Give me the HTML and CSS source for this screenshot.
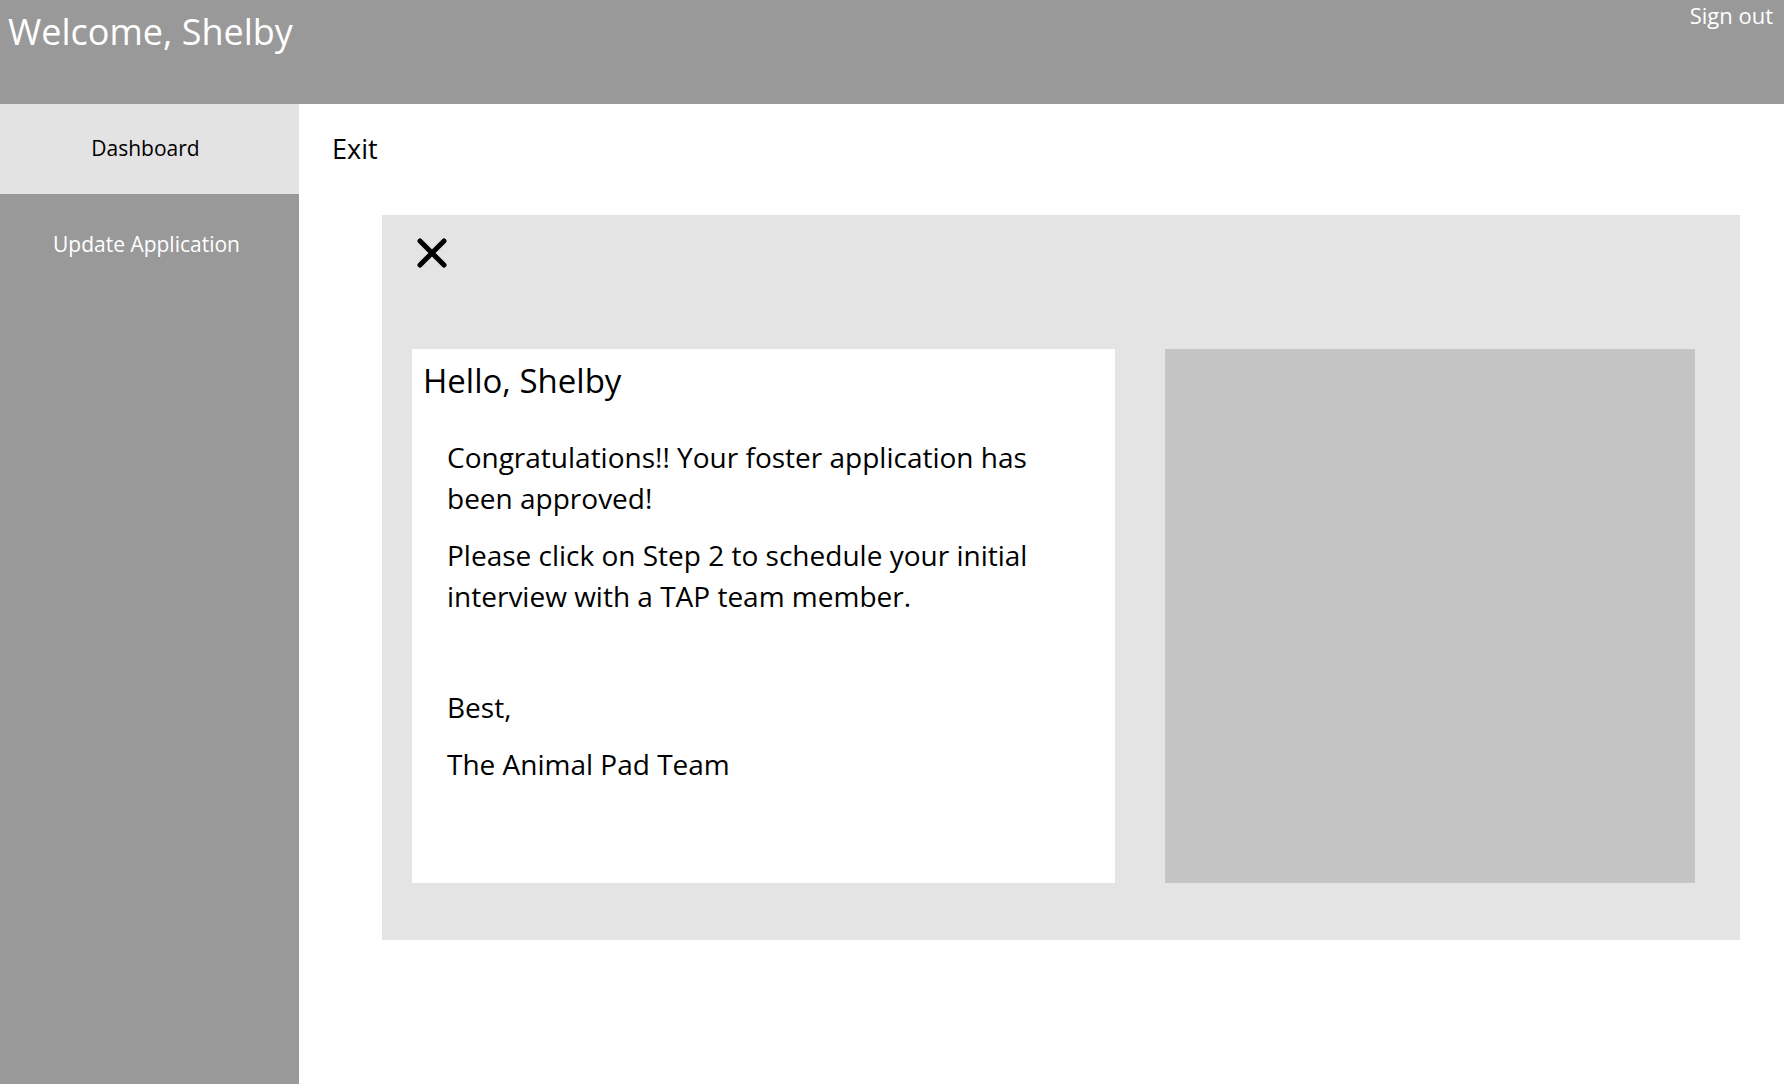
FILE: index.html
```html
<!DOCTYPE html>
<html lang="en">
<head>
    <meta charset="UTF-8">
    <meta name="viewport" content="width=device-width, initial-scale=1.0">
    <title>Dashboard</title>
    <link rel="stylesheet" href="styles.css">
</head>
<body>
    <header class="topbar">
        <h1 class="welcome">Welcome, Shelby</h1>
        <a class="signout" href="#">Sign out</a>
    </header>

    <div class="layout">
        <nav class="sidebar">
            <a class="nav-item nav-active" href="#">Dashboard</a>
            <a class="nav-item nav-update" href="#">Update Application</a>
        </nav>

        <main class="content">
            <a class="exit" href="#">Exit</a>

            <div class="modal">
                <button class="close" type="button" aria-label="Close">
                    <svg width="30" height="30" viewBox="0 0 30 30">
                        <path d="M3 3 L27 27 M27 3 L3 27" stroke="#000" stroke-width="5" stroke-linecap="round" fill="none"/>
                    </svg>
                </button>

                <div class="modal-body">
                    <div class="letter">
                        <h2 class="greeting">Hello, Shelby</h2>
                        <p>Congratulations!! Your foster application has been approved!</p>
                        <p>Please click on Step 2 to schedule your initial interview with a TAP team member.</p>
                        <p class="spacer">&nbsp;</p>
                        <p>Best,</p>
                        <p>The Animal Pad Team</p>
                    </div>
                    <div class="photo"></div>
                </div>
            </div>
        </main>
    </div>
</body>
</html>
```

FILE: styles.css
```css
body {
    margin: 0;
    padding: 0;
    font-family: "Open Sans", Lato, sans-serif;
    color: #000;
    background-color: #fff;
}
a {
    text-decoration: none;
    color: inherit;
}
.topbar {
    height: 104px;
    background-color: #999;
    display: flex;
    justify-content: space-between;
    align-items: flex-start;
    color: #fff;
}
.welcome {
    margin: 0;
    padding: 10px 0 0 8px;
    font-size: 36px;
    font-weight: 400;
    line-height: 43px;
}
.signout {
    padding: 2px 11px 0 0;
    font-size: 22px;
    line-height: 26px;
}
.layout {
    display: flex;
    min-height: 980px;
}
.sidebar {
    width: 299px;
    flex-shrink: 0;
    background-color: #999;
    display: flex;
    flex-direction: column;
}
.nav-item {
    display: block;
    text-align: center;
    font-size: 21px;
    color: #fff;
    padding-right: 8px;
}
.nav-active {
    height: 90px;
    line-height: 88px;
    background-color: #e4e3e4;
    color: #000;
}
.nav-update {
    padding-top: 38px;
    line-height: 25px;
    padding-left: 2px;
}
.content {
    flex: 1;
    padding: 28px 44px 0 33px;
}
.exit {
    display: inline-block;
    font-size: 27px;
    line-height: 34px;
}
.modal {
    margin: 49px 0 0 50px;
    height: 725px;
    box-sizing: border-box;
    background-color: #e4e4e4;
    padding: 23px 45px 57px 30px;
    display: flex;
    flex-direction: column;
}
.close {
    width: 30px;
    height: 30px;
    margin-left: 5px;
    padding: 0;
    border: none;
    background: none;
    cursor: pointer;
}
.close svg {
    display: block;
}
.modal-body {
    flex: 1;
    margin-top: 81px;
    display: flex;
    gap: 50px;
}
.letter {
    width: 703px;
    background-color: #fff;
    padding: 10px 11px;
    box-sizing: border-box;
}
.greeting {
    margin: 0 0 34px 0;
    font-size: 33px;
    font-weight: 400;
    line-height: 44px;
}
.letter p {
    margin: 0 0 16px 24px;
    font-size: 28px;
    line-height: 41px;
    padding-right: 30px;
}
.letter .spacer {
    line-height: 39px;
    margin-bottom: 15px;
}
.photo {
    flex: 1;
    background-color: #c4c4c4;
}
```
